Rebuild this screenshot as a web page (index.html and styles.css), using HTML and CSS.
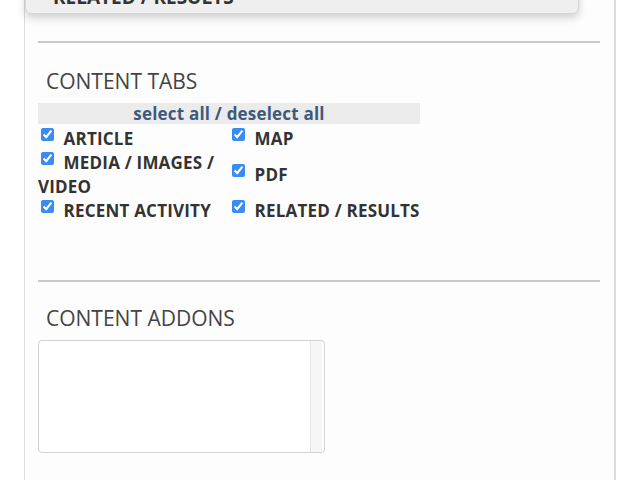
FILE: index.html
```html
<!DOCTYPE html>
<html lang="en">
<head>
    <meta charset="UTF-8">
    <meta name="viewport" content="width=device-width, initial-scale=1.0">
    <title>Content settings</title>
    <link rel="stylesheet" href="styles.css">
</head>
<body>
    <div class="panel">
        <div class="dragcard">RELATED / RESULTS</div>

        <hr class="divider">

        <h3 class="section-title">CONTENT TABS</h3>
        <div class="selectall"><a href="#" id="toggleAll">select all / deselect all</a></div>
        <table class="tabs">
            <tr>
                <td><label><input type="checkbox" checked> ARTICLE</label></td>
                <td><label><input type="checkbox" checked> MAP</label></td>
            </tr>
            <tr>
                <td><label><input type="checkbox" checked> MEDIA / IMAGES / VIDEO</label></td>
                <td><label><input type="checkbox" checked> PDF</label></td>
            </tr>
            <tr>
                <td><label><input type="checkbox" checked> RECENT ACTIVITY</label></td>
                <td><label><input type="checkbox" checked> RELATED / RESULTS</label></td>
            </tr>
        </table>

        <hr class="divider second">

        <h3 class="section-title">CONTENT ADDONS</h3>
        <div class="addons">
            <div class="addons-list"></div>
            <div class="addons-track"></div>
        </div>
    </div>
</body>
</html>
```

FILE: styles.css
```css
body {
    margin: 0;
    background-color: #fff;
    font-family: "Open Sans", "Liberation Sans", sans-serif;
    color: #333;
}
.panel {
    display: flow-root;
    margin-left: 24px;
    width: 562px;
    height: 480px;
    padding: 0 14px 0 13px;
    border-left: 1px solid #dcdcdc;
    border-right: 2px solid #dcdcdc;
    background-color: #fdfdfd;
}
.dragcard {
    margin: -20px 0 0 -13px;
    width: 525px;
    height: 28px;
    padding: 4px 0 0 27px;
    line-height: 24px;
    font-size: 19px;
    font-weight: bold;
    color: #333;
    background-color: #efefef;
    border: 1px solid #d6d6d6;
    border-radius: 6px;
    box-shadow: 0 4px 8px rgba(0, 0, 0, 0.18);
}
.divider {
    margin: 27px 0 0 0;
    border: none;
    height: 2px;
    background-color: #c8c8c8;
}
.divider.second {
    margin-top: 57px;
}
.section-title {
    margin: 24px 0 0 8px;
    font-size: 21px;
    font-weight: normal;
    line-height: 28px;
    color: #444;
}
.second + .section-title {
    margin-top: 22px;
}
.selectall {
    margin-top: 8px;
    width: 382px;
    height: 21px;
    line-height: 21px;
    text-align: center;
    background-color: #ebebeb;
}
.selectall a {
    font-size: 17px;
    font-weight: bold;
    letter-spacing: 0.2px;
    color: #3d5a7c;
    text-decoration: none;
}
.tabs {
    width: 382px;
    border-collapse: collapse;
    margin-top: 3px;
}
.tabs td {
    width: 50%;
    padding: 0;
    vertical-align: middle;
    font-size: 17px;
    font-weight: bold;
    letter-spacing: 0.2px;
    line-height: 24px;
    color: #333;
}
.tabs input {
    margin: 1px 5px 0 3px;
    width: 13px;
    height: 13px;
    vertical-align: top;
    accent-color: #3a8cf2;
}
.addons {
    display: flex;
    margin-top: 8px;
    width: 285px;
    height: 111px;
    border: 1px solid #d2d2d2;
    border-radius: 4px;
    background-color: #fff;
}
.addons-list {
    flex: 1;
}
.addons-track {
    width: 11px;
    margin-right: 2px;
    border-left: 1px solid #e6e6e6;
    background-color: #f6f6f6;
}
```
